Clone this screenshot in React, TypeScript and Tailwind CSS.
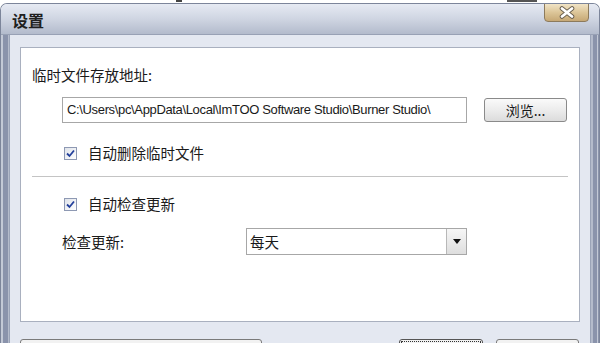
import React from "react"

const Checkbox = () => (
  <span className="w-[13px] h-[13px] border border-[#8e99b3] bg-gradient-to-br from-[#dfe3ea] to-[#ffffff] flex items-center justify-center shrink-0">
    <svg width="9" height="9" viewBox="0 0 9 9">
      <path d="M1 4.5 L3.5 7 L8 1.5" fill="none" stroke="#23409c" strokeWidth="1.8" />
    </svg>
  </span>
)

const App = () => {
  return (
    <div className="w-[600px] h-[343px] overflow-hidden bg-white font-['Liberation_Sans','Noto_Sans_CJK_SC',sans-serif] text-[#1a1a1a]">
      <div className="h-[3px] flex">
        <span className="ml-[176px] w-[6px] h-[2px] bg-[#444]" />
        <span className="ml-[325px] w-[30px] h-[2px] bg-[#555]" />
      </div>
      <div className="h-[340px] flex flex-col rounded-t-[7px] border border-b-0 border-[#7c859a] overflow-hidden">
        {/* title bar */}
        <div className="h-[31px] shrink-0 flex justify-between bg-gradient-to-b from-[#e6eaf3] via-[#cfd5e2] to-[#b3bbcc] border-b border-[#98a1b5] pl-[11px] pr-[10px]">
          <span className="mt-[6px] text-[16px] leading-[20px] font-bold text-[#202020] font-['Noto_Sans_CJK_SC',sans-serif]">设置</span>
          <button className="w-[45px] h-[19px] -mt-[1px] rounded-b-[4px] border border-[#8c7a5c] bg-gradient-to-b from-[#f1e4c6] via-[#dcc598] to-[#c6a875] flex items-center justify-center">
            <svg width="18" height="13" viewBox="0 0 18 13">
              <path d="M4 2.5 L14 10.5 M14 2.5 L4 10.5" stroke="#6a6050" strokeWidth="4.6" strokeLinecap="round" />
              <path d="M4 2.5 L14 10.5 M14 2.5 L4 10.5" stroke="#ffffff" strokeWidth="2.8" strokeLinecap="round" />
            </svg>
          </button>
        </div>
        {/* body */}
        <div className="flex flex-1">
          <div className="w-[9px] bg-[linear-gradient(to_right,#c3c9d6_0px,#c3c9d6_2px,#8a93ab_2px,#8a93ab_7px,#b4bbcb_7px,#b4bbcb_9px)] border-r border-[#9aa3b7]" />
          <div className="flex-1 bg-[#e4e8f1] px-[10px] pt-[12px] flex flex-col">
            <div className="h-[275px] bg-white border border-[#a9b0bf] flex flex-col pl-[11px] pr-[11px] pt-[19px] text-[14.5px] leading-[16px]">
              <span className="font-['Noto_Sans_CJK_SC',sans-serif]">临时文件存放地址:</span>
              <div className="mt-[14px] flex items-center">
                <div className="ml-[30px] w-[405px] h-[26px] border border-[#a7a7a7] bg-white flex items-center pl-[4px] text-[13px] tracking-[-0.35px] whitespace-nowrap overflow-hidden">
                  C:\Users\pc\AppData\Local\ImTOO Software Studio\Burner Studio\
                </div>
                <button className="ml-[17px] w-[83px] h-[24px] rounded-[3px] border border-[#8a8a8a] bg-gradient-to-b from-[#fafafa] via-[#ececec] to-[#dcdcdc] text-[14px] font-['Noto_Sans_CJK_SC',sans-serif] flex items-center justify-center">
                  浏览...
                </button>
              </div>
              <label className="mt-[22px] ml-[32px] flex items-center gap-[11px] font-['Noto_Sans_CJK_SC',sans-serif]">
                <Checkbox />
                <span>自动删除临时文件</span>
              </label>
              <div className="mt-[15px] h-[1px] bg-[#c4c4c4]" />
              <label className="mt-[19px] ml-[32px] flex items-center gap-[11px] font-['Noto_Sans_CJK_SC',sans-serif]">
                <Checkbox />
                <span>自动检查更新</span>
              </label>
              <div className="mt-[16px] ml-[30px] flex items-center">
                <span className="w-[184px] font-['Noto_Sans_CJK_SC',sans-serif]">检查更新:</span>
                <div className="w-[221px] h-[27px] border border-[#a7a7a7] flex">
                  <span className="flex-1 flex items-center pl-[3px] font-['Noto_Sans_CJK_SC',sans-serif]">每天</span>
                  <span className="w-[20px] border-l border-[#b8b8b8] bg-gradient-to-b from-[#f6f6f6] to-[#dedede] flex items-center justify-center">
                    <svg width="8" height="5" viewBox="0 0 8 5">
                      <path d="M0 0 L8 0 L4 5 Z" fill="#111" />
                    </svg>
                  </span>
                </div>
              </div>
            </div>
            <div className="mt-[17px] flex">
              <div className="w-[242px] h-[20px] rounded-[3px] border border-[#7a7a7a] bg-[#f2f2f2]" />
              <div className="ml-[137px] w-[84px] h-[20px] rounded-[3px] border border-[#555] outline outline-1 -outline-offset-3 outline-dotted outline-[#333] bg-[#f2f2f2]" />
              <div className="ml-[13px] w-[83px] h-[20px] rounded-[3px] border border-[#7a7a7a] bg-[#f2f2f2]" />
            </div>
          </div>
          <div className="w-[9px] bg-[linear-gradient(to_right,#b4bbcb_0px,#b4bbcb_2px,#8a93ab_2px,#8a93ab_6px,#c3c9d6_6px,#c3c9d6_7px,#8a93ab_7px,#8a93ab_9px)] border-l border-[#9aa3b7]" />
        </div>
      </div>
    </div>
  )
}

export default App
